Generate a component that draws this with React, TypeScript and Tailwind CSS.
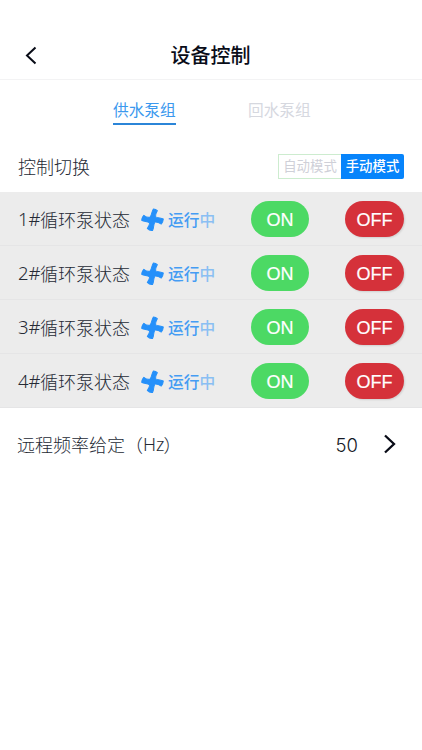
const cjk = "font-['Noto_Sans_CJK_SC',sans-serif]";

function FanIcon() {
  return (
    <svg width="24" height="24" viewBox="0 0 24 24" className="relative top-[1px] shrink-0">
      <path
        fill="#2590fa"
        stroke="#2590fa"
        strokeWidth="1"
        strokeLinejoin="round"
        transform="rotate(6 12 12) translate(.5 .5) scale(.96)"
        d="M12.2.4Q14.6.1 16.5 1.7C15.2 4.2 15.1 6.3 15.3 8.4 17.8 9.3 20.8 9 23.6 9.7Q23.8 12.6 22 15.2C19.6 13.9 17.4 13.4 15.3 13.8 13.7 16.6 15 19.6 13.7 22.8Q10.7 23.6 8 21.3C9.5 18.8 10.1 16.9 9.8 15.1 7.2 13.8 4.2 14.6 1.3 13.4Q.9 10.4 3 8C5.4 9.6 7.5 10.1 9.7 9.1 11.3 6.4 10.6 3.2 12.2.4Z"
      />
    </svg>
  );
}

function PumpRow({ index }: { index: number }) {
  return (
    <div className="flex h-[54px] items-center border-b border-[#e5e5e6] pl-[18px] pr-[18px]">
      <div className="flex w-[122px] shrink-0 items-center whitespace-nowrap text-[18px] leading-[26px] font-light text-[#252a35]">
        <span className="inline-block w-[22px] font-['Noto_Sans',sans-serif] text-[18.5px]">{index}#</span>
        <span>循环泵状态</span>
      </div>
      <FanIcon />
      <span className="ml-[4px] w-[83px] shrink-0 pt-[2px] text-[15.7px] leading-[22px] font-medium text-[#459cf3]">
        运行<span className="text-[#8abff3]">中</span>
      </span>
      <button className="mt-px h-[36px] w-[58px] shrink-0 rounded-full bg-[#4cd964] pt-[2px] font-['Liberation_Sans',sans-serif] text-[18px] text-white [-webkit-text-stroke:0.2px_white]">
        ON
      </button>
      <button className="mt-px ml-auto h-[36px] w-[59px] shrink-0 rounded-full bg-[#d5313a] pt-[2px] font-['Liberation_Sans',sans-serif] text-[18px] text-white shadow-[1px_1px_2px_rgba(0,0,0,0.12)] [-webkit-text-stroke:0.2px_white]">
        OFF
      </button>
    </div>
  );
}

export default function App() {
  return (
    <main className={`h-[750px] w-full overflow-hidden bg-white ${cjk}`}>
      <header className="flex h-[80px] items-start border-b border-[#f3f3f4] pt-[40px]">
        <div className="flex h-[30px] w-[60px] items-center pl-[24px]">
          <svg width="14" height="20" viewBox="0 0 14 20" fill="none" stroke="#080b16" strokeWidth="2">
            <path d="M11.5 2.5 3 10.5l8.5 8" />
          </svg>
        </div>
        <h1 className="flex-1 pr-[61px] text-center text-[20px] leading-[30px] font-medium text-[#090c18]">
          设备控制
        </h1>
      </header>

      <nav className="flex h-[60px] gap-[72px] pl-[113px] pt-[18px]">
        <div className="h-[27px] w-[63px] whitespace-nowrap border-b-2 border-[#2b85d8] text-[15.7px] leading-[24px] text-[#3b99ee]">
          供水泵组
        </div>
        <div className="whitespace-nowrap text-[15.7px] leading-[24px] text-[#d6d8df]">回水泵组</div>
      </nav>

      <section className="flex h-[52px] items-center justify-between pl-[18px] pr-[18px]">
        <span className="text-[18px] leading-[26px] font-light text-[#252a35]">控制切换</span>
        <div className="flex h-[25px] text-[13.4px] leading-[21px]">
          <div className="w-[63px] whitespace-nowrap border border-r-0 border-[#cdeccf] text-center text-[#cfd0d8]">
            自动模式
          </div>
          <div className="w-[63px] whitespace-nowrap rounded-r-[2px] bg-[#0784fb] text-center leading-[23px] font-medium text-white">
            手动模式
          </div>
        </div>
      </section>

      <section className="bg-[#ececec]">
        {[1, 2, 3, 4].map((n) => (
          <PumpRow key={n} index={n} />
        ))}
      </section>

      <section className="flex h-[72px] items-center pl-[17px] pr-[24px] text-[18px] leading-[26px]">
        <span className="flex whitespace-nowrap font-light text-[#252a35]">
          <span className="w-[126px]">远程频率给定（</span>
          <span className="font-['Noto_Sans',sans-serif] text-[18px]">Hz</span>
          <span className="-ml-[1px]">）</span>
        </span>
        <span className="ml-auto mr-[24px] pt-[2px] font-['Inter',sans-serif] text-[18.5px] font-light text-[#151925]">50</span>
        <svg width="16" height="20" viewBox="0 0 16 20" fill="none" stroke="#080b16" strokeWidth="2.3">
          <path d="m3 1.5 9 8.5-9 8.5" />
        </svg>
      </section>
    </main>
  );
}
